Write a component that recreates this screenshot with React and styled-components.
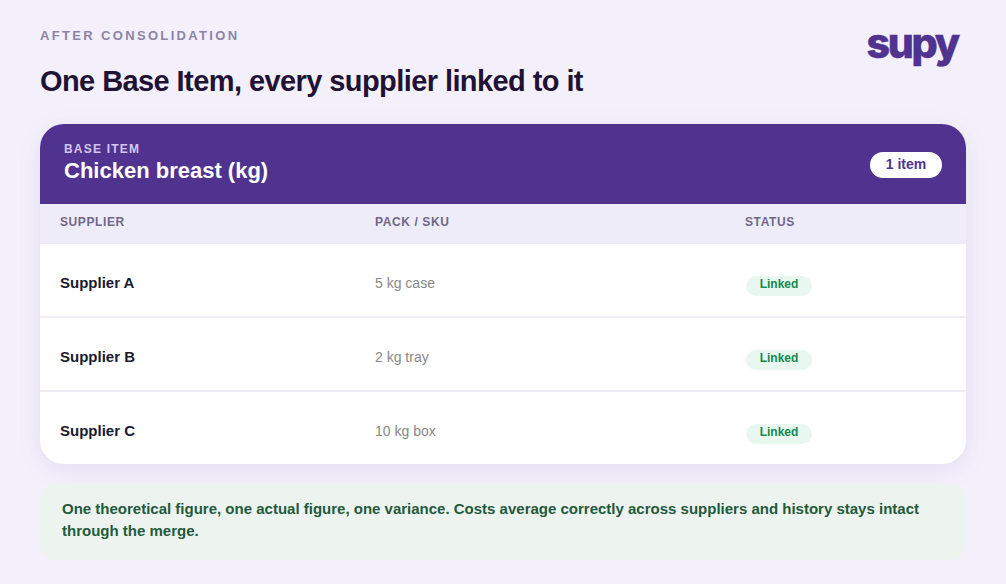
import styled, { createGlobalStyle } from 'styled-components';

const rows = [
  { name: 'Supplier A', pack: '5 kg case' },
  { name: 'Supplier B', pack: '2 kg tray' },
  { name: 'Supplier C', pack: '10 kg box' }
];

const columns = '315px 370px 1fr';

const GlobalStyle = createGlobalStyle`
  html, body {
    margin: 0;
    padding: 0;
    background: #f4f0fb;
    font-family: "Liberation Sans", Arial, sans-serif;
  }
`;

const Page = styled.div`
  width: 1006px;
  height: 584px;
  box-sizing: border-box;
  padding: 28px 40px 0;
  overflow: hidden;
  display: flex;
  flex-direction: column;
`;

const TopBar = styled.header`
  display: flex;
  justify-content: space-between;
  align-items: flex-start;
  height: 96px;
`;

const Eyebrow = styled.div`
  font-size: 13px;
  line-height: 15px;
  font-weight: 700;
  letter-spacing: 2.34px;
  color: #8c84a8;
`;

const Title = styled.h1`
  margin: 21px 0 0;
  font-size: 29px;
  line-height: 34px;
  font-weight: 700;
  letter-spacing: -0.58px;
  color: #1f1235;
`;

const Logo = styled.div`
  margin: -8px 8px 0 0;
  font-family: Inter, sans-serif;
  font-size: 41px;
  line-height: 46px;
  font-weight: 800;
  letter-spacing: -2.2px;
  color: #50338f;
  -webkit-text-stroke: 0.6px #50338f;
`;

const Card = styled.section`
  border-radius: 24px;
  overflow: hidden;
  background: #fff;
  box-shadow: 0 6px 24px rgba(80, 51, 143, 0.09);
`;

const CardHeader = styled.div`
  height: 80px;
  box-sizing: border-box;
  padding: 0 24px 1px;
  background: #50338f;
  display: flex;
  align-items: center;
  justify-content: space-between;
`;

const BaseLabel = styled.div`
  font-size: 12px;
  line-height: 13px;
  font-weight: 700;
  letter-spacing: 1.2px;
  color: #d4c6f2;
`;

const BaseName = styled.div`
  margin-top: 2px;
  font-size: 22px;
  line-height: 26px;
  font-weight: 700;
  color: #fff;
`;

const CountBadge = styled.div`
  height: 26px;
  width: 72px;
  margin-top: 3px;
  border-radius: 13px;
  background: #fff;
  color: #50338f;
  font-size: 14px;
  line-height: 24px;
  font-weight: 700;
  text-align: center;
`;

const HeadRow = styled.div`
  display: grid;
  grid-template-columns: ${columns};
  height: 40px;
  padding-bottom: 4px;
  box-sizing: border-box;
  align-items: center;
  background: #efecf9;
`;

const HeadCell = styled.div`
  padding-left: 20px;
  font-size: 12px;
  font-weight: 700;
  letter-spacing: 0.6px;
  color: #6f6788;
`;

const Row = styled.div`
  display: grid;
  grid-template-columns: ${columns};
  height: 74px;
  box-sizing: border-box;
  align-items: start;
  padding-top: 30px;
  border-bottom: 2px solid #efecf4;

  &:last-child {
    height: 72px;
    border-bottom: 0;
  }
`;

const SupplierCell = styled.div`
  padding-left: 20px;
  font-size: 15px;
  line-height: 18px;
  font-weight: 700;
  color: #1a1a2e;
`;

const PackCell = styled.div`
  padding-left: 20px;
  font-size: 14px;
  line-height: 18px;
  color: #888888;
`;

const StatusCell = styled.div`
  padding: 2px 0 0 21px;
`;

const StatusPill = styled.span`
  display: block;
  width: 66px;
  height: 20px;
  box-sizing: border-box;
  border-radius: 10px;
  background: #e8f7ef;
  color: #15894f;
  font-size: 12px;
  line-height: 16px;
  font-weight: 700;
  text-align: center;
`;

const Note = styled.p`
  margin: 20px 0 0;
  padding: 14px 22px 18px;
  height: 76px;
  box-sizing: border-box;
  border-radius: 16px;
  background: #edf3ef;
  color: #1f5a3c;
  font-size: 15px;
  line-height: 22px;
  font-weight: 700;
`;

export default function App() {
  return (
    <Page>
      <GlobalStyle />
      <TopBar>
        <div>
          <Eyebrow>AFTER CONSOLIDATION</Eyebrow>
          <Title>One Base Item, every supplier linked to it</Title>
        </div>
        <Logo>supy</Logo>
      </TopBar>
      <Card>
        <CardHeader>
          <div>
            <BaseLabel>BASE ITEM</BaseLabel>
            <BaseName>Chicken breast (kg)</BaseName>
          </div>
          <CountBadge>1 item</CountBadge>
        </CardHeader>
        <HeadRow>
          <HeadCell>SUPPLIER</HeadCell>
          <HeadCell>PACK / SKU</HeadCell>
          <HeadCell>STATUS</HeadCell>
        </HeadRow>
        {rows.map(({ name, pack }) => (
          <Row key={name}>
            <SupplierCell>{name}</SupplierCell>
            <PackCell>{pack}</PackCell>
            <StatusCell>
              <StatusPill>Linked</StatusPill>
            </StatusCell>
          </Row>
        ))}
      </Card>
      <Note>
        One theoretical figure, one actual figure, one variance. Costs average correctly across suppliers and history stays intact through the merge.
      </Note>
    </Page>
  );
}
